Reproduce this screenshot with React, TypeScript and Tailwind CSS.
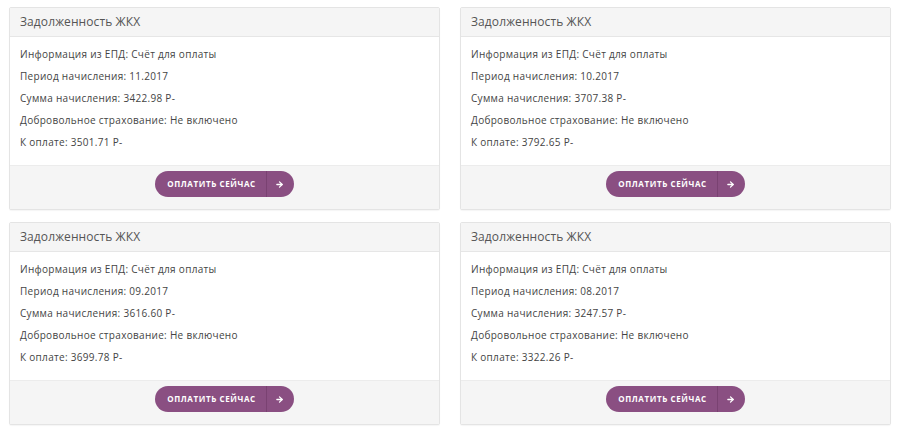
import { ArrowRight } from "lucide-react";

const items = [
  { period: "11.2017", sum: "3422.98", pay: "3501.71" },
  { period: "10.2017", sum: "3707.38", pay: "3792.65" },
  { period: "09.2017", sum: "3616.60", pay: "3699.78" },
  { period: "08.2017", sum: "3247.57", pay: "3322.26" },
];

function Card({ period, sum, pay }: { period: string; sum: string; pay: string }) {
  return (
    <div className="border border-[#e4e4e4] rounded-[2px] bg-white shadow-[0_1px_1px_rgba(0,0,0,0.04)]">
      <div className="h-[29px] bg-[#f5f5f5] border-b border-[#e6e6e6] px-[10px] flex items-center text-[12px] tracking-[0.1px] text-[#555]">
        Задолженность ЖКХ
      </div>
      <div className="px-[10px] pt-[6px] pb-[12px] text-[10px] tracking-[0.3px] text-[#444]">
        <div className="h-[22px] flex items-center">Информация из ЕПД: Счёт для оплаты</div>
        <div className="h-[22px] flex items-center">Период начисления: {period}</div>
        <div className="h-[22px] flex items-center">Сумма начисления: {sum} Р-</div>
        <div className="h-[22px] flex items-center">Добровольное страхование: Не включено</div>
        <div className="h-[22px] flex items-center">К оплате: {pay} Р-</div>
      </div>
      <div className="h-[44px] bg-[#f5f5f5] border-t border-[#ececec] flex justify-center pt-[5px]">
        <button className="h-[26px] flex items-stretch rounded-full bg-[#8a4f82] text-white">
          <span className="w-[111px] flex items-center justify-center pl-[2px] text-[8px] font-bold tracking-[0.6px]">
            ОПЛАТИТЬ СЕЙЧАС
          </span>
          <span className="w-[28px] border-l border-[#7a4272] flex items-center justify-center pr-[3px]">
            <ArrowRight size={9} strokeWidth={3.5} />
          </span>
        </button>
      </div>
    </div>
  );
}

export default function App() {
  return (
    <div className="w-[900px] h-[431px] bg-white p-[9px] pt-[7px] font-['Open_Sans',sans-serif]">
      <div className="grid grid-cols-2 gap-x-5 gap-y-[12px]">
        {items.map((it) => (
          <Card key={it.period} {...it} />
        ))}
      </div>
    </div>
  );
}
